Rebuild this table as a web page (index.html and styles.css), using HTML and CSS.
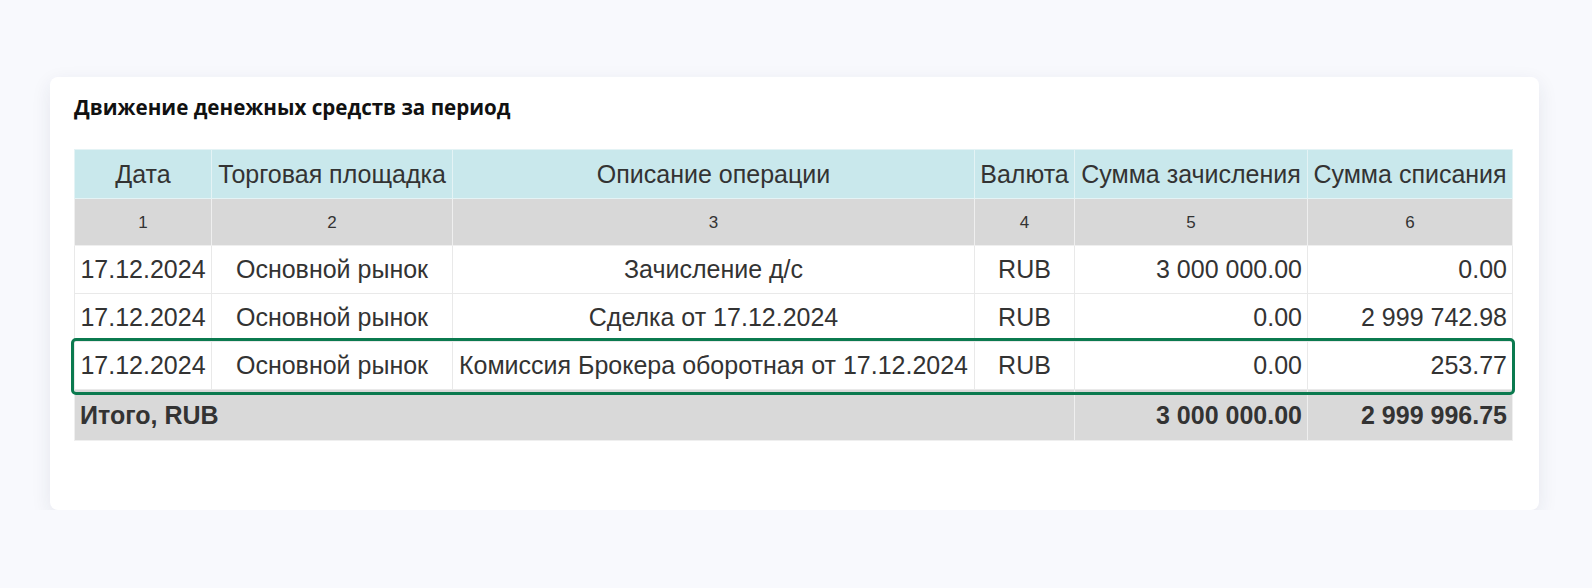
FILE: index.html
```html
<!DOCTYPE html>
<html lang="ru">
<head>
<meta charset="utf-8">
<link rel="stylesheet" href="styles.css">
</head>
<body>
<div class="page">
  <section class="card">
    <h2 class="card-title">Движение денежных средств за период</h2>
    <div class="table-wrap">
      <table class="report">
        <colgroup>
          <col class="c-date"><col class="c-market"><col class="c-desc"><col class="c-cur"><col class="c-in"><col class="c-out">
        </colgroup>
        <thead>
          <tr class="head">
            <th>Дата</th><th>Торговая площадка</th><th>Описание операции</th><th>Валюта</th><th>Сумма зачисления</th><th>Сумма списания</th>
          </tr>
          <tr class="nums">
            <th>1</th><th>2</th><th>3</th><th>4</th><th>5</th><th>6</th>
          </tr>
        </thead>
        <tbody>
          <tr>
            <td class="center">17.12.2024</td><td class="center">Основной рынок</td><td class="center">Зачисление д/с</td><td class="center">RUB</td><td class="num">3 000 000.00</td><td class="num">0.00</td>
          </tr>
          <tr>
            <td class="center">17.12.2024</td><td class="center">Основной рынок</td><td class="center">Сделка от 17.12.2024</td><td class="center">RUB</td><td class="num">0.00</td><td class="num">2 999 742.98</td>
          </tr>
          <tr>
            <td class="center">17.12.2024</td><td class="center">Основной рынок</td><td class="center">Комиссия Брокера оборотная от 17.12.2024</td><td class="center">RUB</td><td class="num">0.00</td><td class="num">253.77</td>
          </tr>
          <tr class="total">
            <td colspan="4">Итого, RUB</td><td class="num">3 000 000.00</td><td class="num">2 999 996.75</td>
          </tr>
        </tbody>
      </table>
      <div class="highlight"></div>
    </div>
  </section>
</div>
</body>
</html>
```

FILE: styles.css
```css
html, body {
  margin: 0;
  padding: 0;
}
body {
  background: #f8f9fd;
  font-family: "Liberation Sans", Arial, sans-serif;
  color: #333;
}
.page {
  padding: 77px 53px 0 50px;
}
.card {
  background: #fff;
  border-radius: 8px;
  box-shadow: 0 6px 20px rgba(30, 40, 80, 0.09);
  height: 433px;
  box-sizing: border-box;
  padding: 16px 27px 0 24px;
}
.card-title {
  margin: 0;
  font-family: "Open Sans", sans-serif;
  font-weight: 700;
  font-size: 20.6px;
  line-height: 28px;
  color: #111;
}
.table-wrap {
  position: relative;
  margin-top: 28px;
}
.report {
  width: 100%;
  border-collapse: collapse;
  table-layout: fixed;
  font-size: 25px;
}
.c-date { width: 137px; }
.c-market { width: 241px; }
.c-desc { width: 522px; }
.c-cur { width: 100px; }
.c-in { width: 233px; }
.c-out { width: 205px; }
.report th, .report td {
  padding: 0 5px;
  border: 1px solid #e9e9e9;
  white-space: nowrap;
  font-weight: 400;
}
.head th {
  background: #c9e8ec;
  height: 48px;
  border-color: #e4f3f5;
  text-align: center;
}
.nums th {
  background: #d8d8d8;
  height: 44px;
  font-size: 17px;
  padding-top: 2px;
  border-color: #efefef;
}
.report td {
  height: 47px;
  background: #fff;
}
.center { text-align: center; }
.num { text-align: right; }
.report tr.total td {
  background: #d9d9d9;
  font-weight: 700;
  height: 50px;
  border-color: #efefef;
}
.highlight {
  position: absolute;
  left: -3px;
  right: -3px;
  top: 189px;
  height: 57px;
  box-sizing: border-box;
  border: 3px solid #0b7a4f;
  border-radius: 5px;
  pointer-events: none;
}
```
